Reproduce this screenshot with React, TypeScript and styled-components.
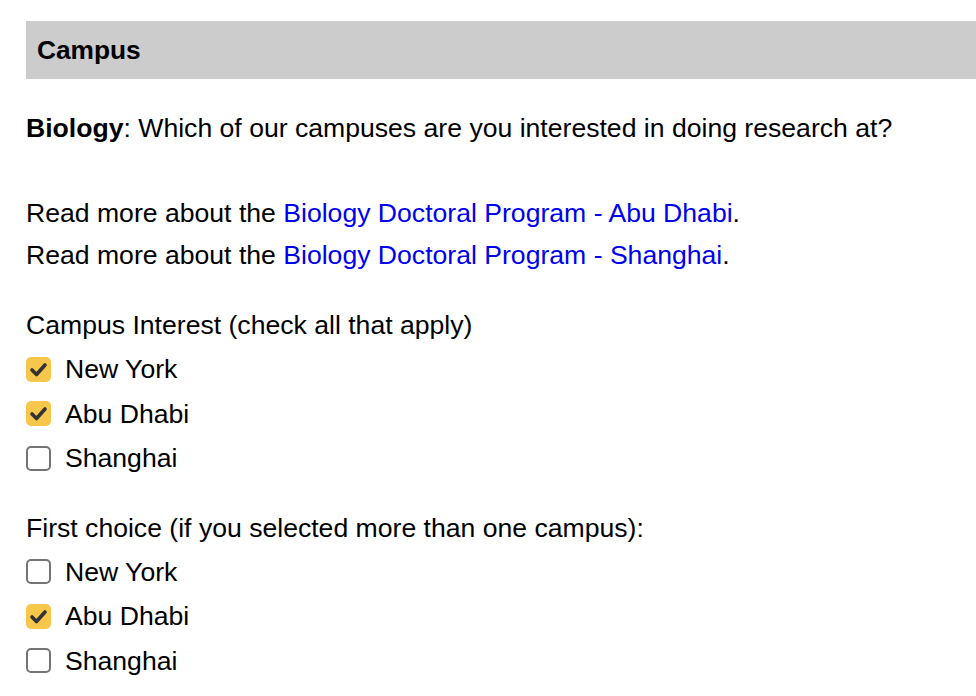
import React from "react";
import styled, { createGlobalStyle } from "styled-components";

const Global = createGlobalStyle`
  html, body { margin: 0; padding: 0; background: #fff; }
  body { font-family: "Liberation Sans", Arial, sans-serif; color: #000; overflow: hidden; }
`;

const Page = styled.div`
  padding: 21px 0 0 26px;
  font-size: 26.6px;
  line-height: 42px;
`;

const SectionHeader = styled.div`
  background: #cccccc;
  height: 58px;
  display: flex;
  align-items: center;
  padding-left: 11px;
  font-weight: bold;
  font-size: 26.3px;
`;

const Question = styled.p`
  margin: 28px 0 0;
`;

const Links = styled.div`
  margin-top: 43px;
`;

const Line = styled.div``;

const Link = styled.a`
  color: #0000ee;
  text-decoration: none;
`;

const Group = styled.fieldset<{ $top: number }>`
  border: 0;
  padding: 0;
  margin: ${(p) => p.$top}px 0 0;
`;

const GroupLabel = styled.legend`
  padding: 0;
  line-height: 42px;
  margin-bottom: 1px;
`;

const Row = styled.label`
  display: flex;
  align-items: center;
  gap: 14px;
  height: 44.5px;
`;

const Box = styled.span<{ $checked: boolean }>`
  width: 25px;
  height: 25px;
  box-sizing: border-box;
  border-radius: 5px;
  flex: none;
  display: flex;
  align-items: center;
  justify-content: center;
  background: ${(p) => (p.$checked ? "#f7c74c" : "#fff")};
  border: ${(p) => (p.$checked ? "none" : "2px solid #747474")};
`;

const Check = () => (
  <svg width="19" height="19" viewBox="0 0 19 19">
    <path d="M3 10 L7.5 14.5 L16 5" fill="none" stroke="#333" strokeWidth="3.6" strokeLinecap="round" strokeLinejoin="round" />
  </svg>
);

const Option = ({ label, checked }: { label: string; checked: boolean }) => (
  <Row>
    <Box $checked={checked}>{checked && <Check />}</Box>
    <span>{label}</span>
  </Row>
);

export default function App() {
  return (
    <Page>
      <Global />
      <SectionHeader>Campus</SectionHeader>
      <Question>
        <b>Biology</b>: Which of our campuses are you interested in doing research at?
      </Question>
      <Links>
        <Line>
          Read more about the <Link href="#">Biology Doctoral Program - Abu Dhabi</Link>.
        </Line>
        <Line>
          Read more about the <Link href="#">Biology Doctoral Program - Shanghai</Link>.
        </Line>
      </Links>
      <Group $top={28}>
        <GroupLabel>Campus Interest (check all that apply)</GroupLabel>
        <Option label="New York" checked />
        <Option label="Abu Dhabi" checked />
        <Option label="Shanghai" checked={false} />
      </Group>
      <Group $top={26}>
        <GroupLabel>First choice (if you selected more than one campus):</GroupLabel>
        <Option label="New York" checked={false} />
        <Option label="Abu Dhabi" checked />
        <Option label="Shanghai" checked={false} />
      </Group>
    </Page>
  );
}
